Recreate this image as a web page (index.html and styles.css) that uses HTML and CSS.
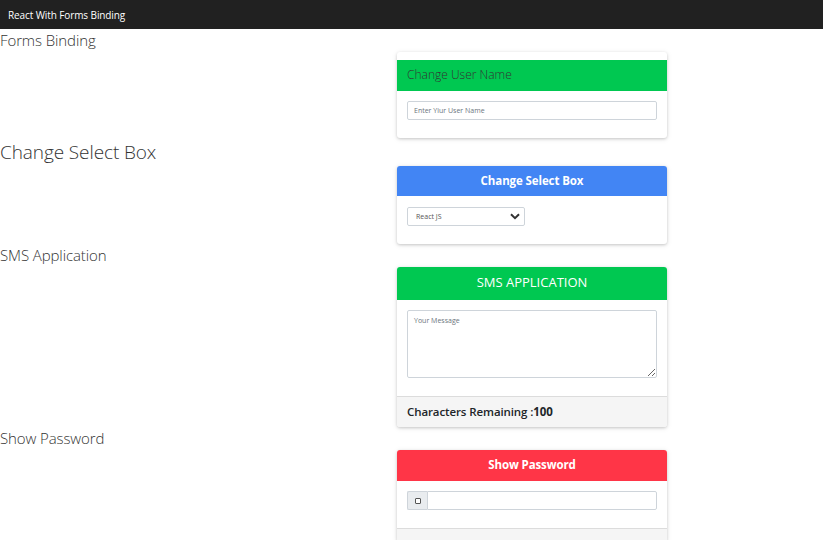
FILE: index.html
```html
<!DOCTYPE html>
<html>
<head>
<meta charset="utf-8">
<title>React With Forms Binding</title>
<link rel="stylesheet" href="styles.css">
</head>
<body>
<nav class="navbar">React With Forms Binding</nav>
<main>
  <section class="section">
    <h2 class="title">Forms Binding</h2>
    <div class="card card-gap">
      <div class="card-header header-green header-left">Change User Name</div>
      <div class="card-body">
        <input class="form-control" type="text" placeholder="Enter Yiur User Name">
      </div>
    </div>
  </section>

  <section class="section">
    <h2 class="title title-lg">Change Select Box</h2>
    <div class="card">
      <div class="card-header header-blue header-bold">Change Select Box</div>
      <div class="card-body body-select">
        <div class="select-wrap">
          <select class="select">
            <option>React JS</option>
            <option>Angular</option>
            <option>Vue JS</option>
          </select>
          <svg class="chevron" width="10" height="7" viewBox="0 0 10 7"><path d="M1 1.2 L5 5.2 L9 1.2" fill="none" stroke="#333" stroke-width="2"/></svg>
        </div>
      </div>
    </div>
  </section>

  <section class="section">
    <h2 class="title">SMS Application</h2>
    <div class="card">
      <div class="card-header header-green header-upper">SMS APPLICATION</div>
      <div class="card-body">
        <textarea class="form-control textarea" placeholder="Your Message"></textarea>
      </div>
      <div class="card-footer">Characters Remaining :<b>100</b></div>
    </div>
  </section>

  <section class="section">
    <h2 class="title">Show Password</h2>
    <div class="card">
      <div class="card-header header-red header-bold">Show Password</div>
      <div class="card-body">
        <div class="input-group">
          <span class="addon"><span class="check"></span></span>
          <input class="form-control group-input" type="password">
        </div>
      </div>
      <div class="card-footer footer-empty"></div>
    </div>
  </section>
</main>
</body>
</html>
```
FILE: styles.css
```css
* { box-sizing: border-box; }
html, body { margin: 0; padding: 0; }
body {
  font-family: "Open Sans", "Noto Sans", sans-serif;
  color: #212529;
  background: #fff;
  width: 823px;
  height: 540px;
  overflow: hidden;
}
.navbar {
  height: 29px;
  background: #212121;
  color: #fff;
  font-size: 10px;
  line-height: 31px;
  padding-left: 8px;
  letter-spacing: -0.1px;
}
.title {
  margin: 0;
  font-weight: 300;
  font-size: 15px;
  line-height: 23px;
  height: 23px;
  color: #333;
  letter-spacing: -0.1px;
}
.title-lg {
  font-size: 19px;
  line-height: 28px;
  height: 28px;
}
.card {
  margin-left: 397px;
  width: 270px;
  background: #fff;
  border-radius: 3px;
  box-shadow: 0 1px 3px rgba(0,0,0,.18), 0 1px 6px rgba(0,0,0,.08);
  overflow: hidden;
}
.card-gap { padding-top: 8px; }
.card-header {
  height: 31px;
  line-height: 30px;
  font-size: 12px;
  color: #fff;
  text-align: center;
}
.header-green { background: #00c851; }
.header-blue { background: #4285f4; height: 30px; }
.header-red { background: #ff3547; }
.header-left {
  text-align: left;
  padding-left: 10px;
  color: #333;
  font-weight: 300;
}
.header-bold {
  font-weight: 700;
  font-size: 11.5px;
  letter-spacing: -0.1px;
}
.header-upper {
  height: 33px;
  line-height: 30px;
  font-size: 13px;
  font-weight: 400;
}
.card-body {
  padding: 10px 10px 18px;
}
.body-select { padding-top: 11px; }
.form-control {
  display: block;
  width: 250px;
  height: 19px;
  border: 1px solid #ced4da;
  border-radius: 2px;
  font-family: inherit;
  font-size: 7px;
  padding: 0 6px;
  color: #495057;
  background: #fff;
  outline: none;
}
.form-control::placeholder { color: #6c757d; }
.textarea {
  height: 68px;
  padding: 5px 6px;
  resize: vertical;
}
.select-wrap {
  position: relative;
  width: 118px;
  height: 19px;
}
.select {
  display: block;
  appearance: none;
  -webkit-appearance: none;
  width: 118px;
  height: 19px;
  border: 1px solid #ced4da;
  border-radius: 2px;
  background: #fff;
  font-family: inherit;
  font-size: 7px;
  color: #555;
  padding: 0 8px;
  outline: none;
}
.chevron {
  position: absolute;
  right: 5px;
  top: 6px;
  pointer-events: none;
}
.card-footer {
  height: 31px;
  background: #f5f5f5;
  border-top: 1px solid #dcdcdc;
  font-size: 11.5px;
  line-height: 30px;
  padding-left: 10px;
  font-weight: 600;
  color: #212529;
  letter-spacing: -0.1px;
}
.card-footer b { font-weight: 700; }
.footer-empty { height: 14px; }
.input-group {
  display: flex;
  width: 250px;
  height: 19px;
}
.addon {
  width: 20px;
  height: 19px;
  background: #e9ecef;
  border: 1px solid #ced4da;
  border-right: none;
  border-radius: 2px 0 0 2px;
  display: flex;
  align-items: center;
  justify-content: center;
}
.check {
  width: 6px;
  height: 6px;
  border: 1px solid #555;
  border-radius: 1px;
  background: #fff;
}
.group-input {
  width: 230px;
  border-radius: 0 2px 2px 0;
}
```
